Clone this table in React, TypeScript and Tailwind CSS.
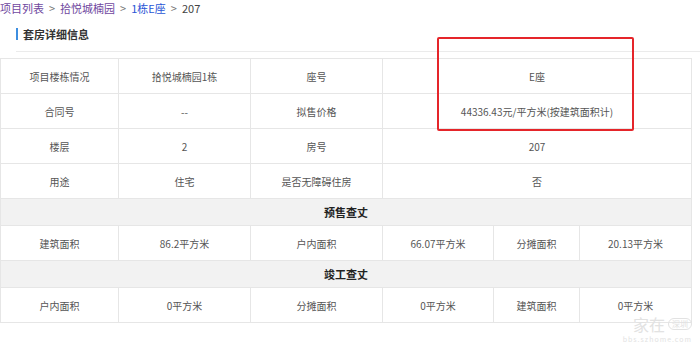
import React from "react"

const font = { fontFamily: '"Noto Sans CJK SC", "Noto Sans", sans-serif' }

const Cell = ({ children, span }: { children: React.ReactNode; span?: number }) => (
  <td colSpan={span} className="border border-[#e6e6e6] h-[35px] text-center text-[10px] text-[#555] p-0">
    {children}
  </td>
)

const SectionRow = ({ title }: { title: string }) => (
  <tr>
    <td colSpan={6} className="border border-[#e6e6e6] bg-[#f2f2f2] h-[27px] text-center text-[11px] font-bold text-[#222] p-0">
      {title}
    </td>
  </tr>
)

const App = () => {
  return (
    <div className="relative w-[700px] h-[344px] bg-white overflow-hidden" style={font}>
      <div className="flex items-center h-[16px] text-[11px] leading-[16px]">
        <span className="text-[#7048a0]">项目列表</span>
        <span className="text-[#777] px-[5px]">&gt;</span>
        <span className="text-[#7048a0]">拾悦城楠园</span>
        <span className="text-[#777] px-[5px]">&gt;</span>
        <span className="text-[#2a56d6]">1栋E座</span>
        <span className="text-[#777] px-[5px]">&gt;</span>
        <span className="text-[#444]">207</span>
      </div>

      <div className="ml-[16px] mt-[10px] flex items-center gap-[5px] h-[16px]">
        <span className="w-[2px] h-[12px] bg-[#3d8ee0]" />
        <span className="text-[11px] font-bold text-[#333]">套房详细信息</span>
      </div>
      <div className="ml-[16px] mt-[9px] border-t border-[#ebebeb]" />

      <table className="mt-[6px] w-[691px] table-fixed border-collapse">
        <colgroup>
          <col className="w-[118px]" />
          <col className="w-[132px]" />
          <col className="w-[132px]" />
          <col className="w-[111px]" />
          <col className="w-[86px]" />
          <col className="w-[112px]" />
        </colgroup>
        <tbody>
          <tr>
            <Cell>项目楼栋情况</Cell>
            <Cell>拾悦城楠园1栋</Cell>
            <Cell>座号</Cell>
            <Cell span={3}>E座</Cell>
          </tr>
          <tr>
            <Cell>合同号</Cell>
            <Cell>--</Cell>
            <Cell>拟售价格</Cell>
            <Cell span={3}>44336.43元/平方米(按建筑面积计)</Cell>
          </tr>
          <tr>
            <Cell>楼层</Cell>
            <Cell>2</Cell>
            <Cell>房号</Cell>
            <Cell span={3}>207</Cell>
          </tr>
          <tr>
            <Cell>用途</Cell>
            <Cell>住宅</Cell>
            <Cell>是否无障碍住房</Cell>
            <Cell span={3}>否</Cell>
          </tr>
          <SectionRow title="预售查丈" />
          <tr>
            <Cell>建筑面积</Cell>
            <Cell>86.2平方米</Cell>
            <Cell>户内面积</Cell>
            <Cell>66.07平方米</Cell>
            <Cell>分摊面积</Cell>
            <Cell>20.13平方米</Cell>
          </tr>
          <SectionRow title="竣工查丈" />
          <tr>
            <Cell>户内面积</Cell>
            <Cell>0平方米</Cell>
            <Cell>分摊面积</Cell>
            <Cell>0平方米</Cell>
            <Cell>建筑面积</Cell>
            <Cell>0平方米</Cell>
          </tr>
        </tbody>
      </table>

      {/* red highlight box */}
      <div className="absolute left-[437px] top-[37px] w-[197px] h-[94px] border-2 border-[#e5252a] rounded-[2px]" />

      {/* watermark */}
      <div className="absolute right-[8px] top-[315px] flex flex-col items-end gap-[2px] text-[#e2e2e2]">
        <div className="flex items-center gap-[3px] h-[18px]">
          <span className="text-[16px] leading-[18px]">家在</span>
          <span className="text-[8px] leading-[10px] border border-[#e2e2e2] rounded-[6px] px-[3px]">深圳</span>
        </div>
        <span className="text-[7px] leading-[8px] tracking-[1px]">bbs.szhome.com</span>
      </div>
    </div>
  )
}

export default App
